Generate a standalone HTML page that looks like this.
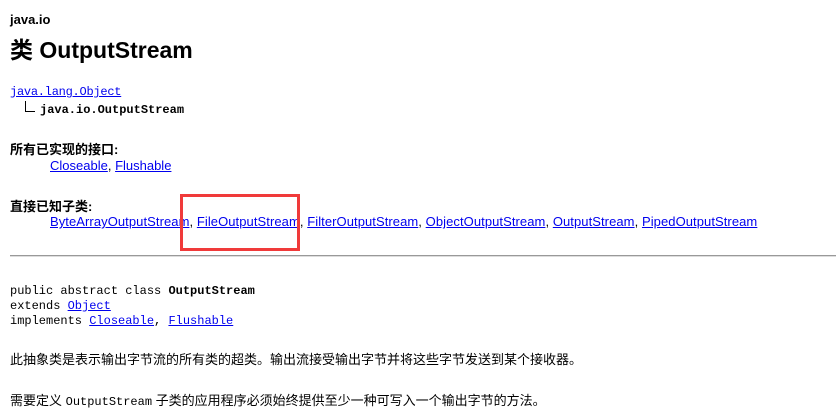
<!DOCTYPE html>
<html><head><meta charset="utf-8"><style>
body{margin:0;width:836px;height:418px;background:#fff;position:relative;overflow:hidden;font-family:"Liberation Sans","Noto Sans CJK SC",sans-serif;color:#000}
.a{position:absolute;white-space:nowrap}
a{color:#00e;text-decoration:underline}
.m{font-family:"Liberation Mono","Noto Sans CJK SC",monospace;font-size:12px}
.s{font-size:13px}
b{font-weight:bold}
</style></head><body>
<div class="a" style="left:10px;top:12px;font-size:13px;font-weight:bold">java.io</div>
<div class="a" style="left:10px;top:31px;font-size:23px;font-weight:bold">类 OutputStream</div>
<div class="a m" style="left:10px;top:85px;letter-spacing:-0.25px"><a>java.lang.Object</a></div>
<div class="a" style="left:25px;top:101px;width:1px;height:11px;background:#000"></div>
<div class="a" style="left:25px;top:111px;width:10px;height:1px;background:#000"></div>
<div class="a m" style="left:40px;top:103px;font-weight:bold">java.io.OutputStream</div>
<div class="a s" style="left:10px;top:139px;font-weight:bold">所有已实现的接口:</div>
<div class="a s" style="left:50px;top:158px"><a>Closeable</a>, <a>Flushable</a></div>
<div class="a s" style="left:10px;top:196px;font-weight:bold">直接已知子类:</div>
<div class="a s" style="left:50px;top:214px;letter-spacing:0.07px"><a>ByteArrayOutputStream</a>, <a>FileOutputStream</a>, <a>FilterOutputStream</a>, <a>ObjectOutputStream</a>, <a>OutputStream</a>, <a>PipedOutputStream</a></div>
<div class="a" style="left:180px;top:194px;width:114px;height:51px;border:3px solid #f03a3a"></div>
<div class="a" style="left:10px;top:255px;width:826px;height:1px;background:#999;border-bottom:1px solid #ddd"></div>
<div class="a m" style="left:10px;top:284px;line-height:15px">public abstract class <b>OutputStream</b><br>extends <a>Object</a><br>implements <a>Closeable</a>, <a>Flushable</a></div>
<div class="a s" style="left:10px;top:349px">此抽象类是表示输出字节流的所有类的超类。输出流接受输出字节并将这些字节发送到某个接收器。</div>
<div class="a s" style="left:10px;top:390px">需要定义 <span class="m">OutputStream</span> 子类的应用程序必须始终提供至少一种可写入一个输出字节的方法。</div>
</body></html>
